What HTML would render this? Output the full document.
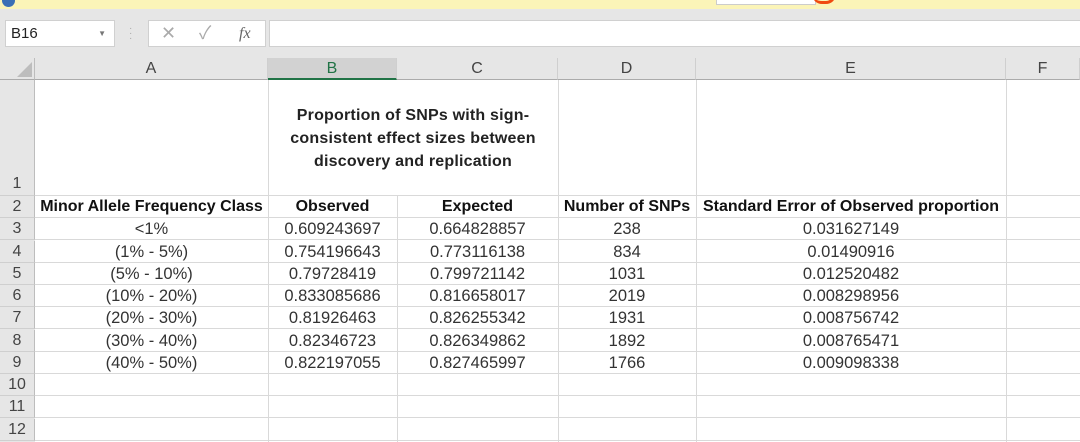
<!DOCTYPE html>
<html><head><style>
*{margin:0;padding:0;box-sizing:border-box}
body{width:1080px;height:442px;overflow:hidden;background:#e6e6e6;font-family:"Liberation Sans","Noto Sans CJK SC",sans-serif;position:relative;color:#222}
.a{position:absolute}
.c{position:absolute;text-align:center;font-size:16.5px;line-height:22px;white-space:nowrap}
.hl{position:absolute;height:1px;background:#d9d9d9}
.vl{position:absolute;width:1px;background:#d9d9d9}
.rh{position:absolute;left:0;width:35px;text-align:center;font-size:16px;color:#444;background:#e6e6e6;border-bottom:1px solid #cfcfcf;border-right:1px solid #bdbdbd}
.ch{position:absolute;top:58px;height:22px;text-align:center;font-size:16px;line-height:22px;color:#444;border-right:1px solid #cfcfcf;border-bottom:1px solid #ababab}
</style></head><body>
<div class="a" style="left:0;top:0;width:1080px;height:9px;background:#fbf4b8"></div>
<div class="a" style="left:2px;top:-6px;width:13px;height:13px;border-radius:50%;background:#3a6fb5"></div>
<div class="a" style="left:716px;top:0;width:100px;height:5px;background:#fff;border:1px solid #ccc;border-top:none"></div>
<div class="a" style="left:812px;top:-8px;width:24px;height:12px;border:3px solid #f04a10;border-radius:0 0 10px 10px;border-top:none;border-left:none"></div>
<div class="a" style="left:5px;top:20px;width:110px;height:27px;background:#fff;border:1px solid #d0d0d0;font-size:15px;line-height:25px;padding-left:5px">B16<span style="position:absolute;right:8px;font-size:8px;color:#777">▼</span></div>
<div class="a" style="left:129px;top:26px;color:#aaa;font-size:10px;line-height:5px">·<br>·<br>·</div>
<div class="a" style="left:148px;top:20px;width:118px;height:27px;background:#fff;border:1px solid #d0d0d0;color:#aaa;font-size:18px;line-height:25px"><span style="position:absolute;left:12px">✕</span><span style="position:absolute;left:50px">✓</span><span style="position:absolute;left:90px;font-family:'Liberation Serif',serif;font-style:italic;color:#666;font-size:16px">fx</span></div>
<div class="a" style="left:269px;top:20px;width:811px;height:27px;background:#fff;border:1px solid #d0d0d0;border-right:none"></div>
<div class="a" style="left:0;top:58px;width:35px;height:22px;border-right:1px solid #bdbdbd;border-bottom:1px solid #ababab"></div>
<div class="a" style="left:17px;top:62px;width:0;height:0;border-left:15px solid transparent;border-bottom:15px solid #bdbdbd"></div>
<div class="ch" style="left:35px;width:233px">A</div>
<div class="ch" style="left:268px;width:129px;background:#d2d2d2;color:#217346;border-bottom:2px solid #217346">B</div>
<div class="ch" style="left:397px;width:161px">C</div>
<div class="ch" style="left:558px;width:138px">D</div>
<div class="ch" style="left:696px;width:310px">E</div>
<div class="ch" style="left:1006px;width:74px">F</div>
<div class="a" style="left:35px;top:80px;width:1045px;height:362px;background:#fff"></div>
<div class="vl" style="left:268px;top:80px;height:362px"></div>
<div class="vl" style="left:397px;top:196px;height:246px"></div>
<div class="vl" style="left:558px;top:80px;height:362px"></div>
<div class="vl" style="left:696px;top:80px;height:362px"></div>
<div class="vl" style="left:1006px;top:80px;height:362px"></div>
<div class="rh" style="top:80px;height:116px;line-height:22px;padding-top:93px">1</div>
<div class="hl" style="left:35px;top:195px;width:1045px"></div>
<div id="rows"></div>
<div class="c" style="left:263px;top:104px;width:300px;font-weight:bold;font-size:16px;line-height:23px;white-space:normal;padding:0 8px;letter-spacing:0.2px">Proportion of SNPs with sign-consistent effect sizes between discovery and replication</div>
<script>
var d=[["Minor Allele Frequency Class","Observed","Expected","Number of SNPs","Standard Error of Observed proportion"],
["&lt;1%","0.609243697","0.664828857","238","0.031627149"],
["(1% - 5%)","0.754196643","0.773116138","834","0.01490916"],
["(5% - 10%)","0.79728419","0.799721142","1031","0.012520482"],
["(10% - 20%)","0.833085686","0.816658017","2019","0.008298956"],
["(20% - 30%)","0.81926463","0.826255342","1931","0.008756742"],
["(30% - 40%)","0.82346723","0.826349862","1892","0.008765471"],
["(40% - 50%)","0.822197055","0.827465997","1766","0.009098338"]];
var L=[35,268,397,558,696],W=[233,129,161,138,310],h="";
for(var r=2;r<=12;r++){var t=Math.round(196+(r-2)*22.25);
h+='<div class="rh" style="top:'+t+'px;height:22px;line-height:22px">'+r+'</div>';
h+='<div class="hl" style="left:35px;top:'+(t+21)+'px;width:1045px"></div>';
var row=d[r-2];if(row)for(var i=0;i<5;i++)h+='<div class="c" style="left:'+L[i]+'px;top:'+t+'px;width:'+W[i]+'px;'+(r==2?'font-weight:bold;font-size:16px;color:#111':'color:#333')+'">'+row[i]+'</div>';}
document.getElementById('rows').innerHTML=h;
</script>
</body></html>
